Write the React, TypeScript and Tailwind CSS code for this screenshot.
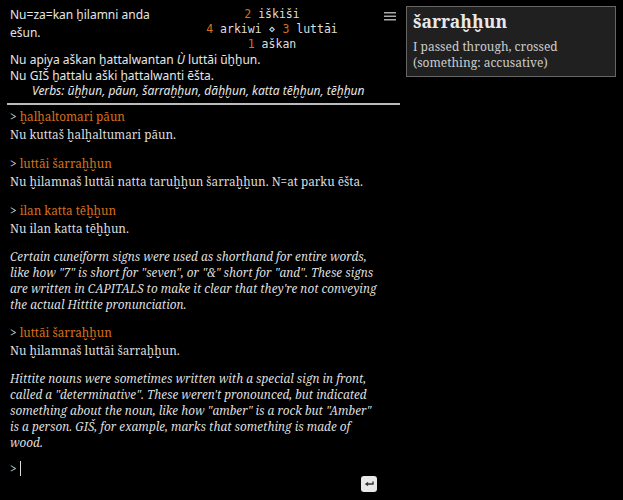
import React from 'react';

const serif = { fontFamily: '"Noto Serif", "DejaVu Serif", serif' };

function Command({ text }: { text: string }) {
  return (
    <div className="text-[11.75px] leading-[18px]">
      <span className="text-[#ddd]">&gt; </span>
      <span className="text-[#d8701c]">{text}</span>
    </div>
  );
}

export default function App() {
  return (
    <div className="w-[623px] h-[500px] bg-black text-[#ddd] flex overflow-hidden">
      <div className="w-[400px] shrink-0 flex flex-col relative">
        <div className="pl-[10px] pt-[6px]" style={{ fontFamily: '"Noto Sans", "Open Sans", sans-serif' }}>
          <div className="flex">
            <div className="w-[150px] text-[12px] leading-[18px] text-[#e6e6e6]">Nu=za=kan ḫilamni anda ešun.</div>
            <div className="w-[224px] mt-[1px] text-[11.5px] leading-[15px] text-[#ddd] text-center" style={{ fontFamily: '"DejaVu Sans Mono", monospace' }}>
              <div><span className="text-[#d8701c]">2</span> iškiši</div>
              <div><span className="text-[#d8701c]">4</span> arkiwi ⋄ <span className="text-[#d8701c]">3</span> luttāi</div>
              <div><span className="text-[#d8701c]">1</span> aškan</div>
            </div>
            <div className="w-[12px] pt-[6px]">
              <svg width="12" height="9" viewBox="0 0 12 9">
                <rect x="0" y="0" width="12" height="1.5" fill="#aaa" />
                <rect x="0" y="3.5" width="12" height="1.5" fill="#aaa" />
                <rect x="0" y="7" width="12" height="1.5" fill="#aaa" />
              </svg>
            </div>
          </div>
          <div className="text-[12px] leading-[15.5px] text-[#e6e6e6]">
            <div>Nu apiya aškan ḫattalwantan <i>Ù</i> luttāi ūḫḫun.</div>
            <div>Nu GIŠ ḫattalu aški ḫattalwanti ēšta.</div>
            <div className="italic pl-[22px]">Verbs: ūḫḫun, pāun, šarraḫḫun, dāḫḫun, katta tēḫḫun, tēḫḫun</div>
          </div>
        </div>
        <div className="ml-[7px] mt-[4px] h-[2px] bg-[#bbb]" />
        <div className="pl-[10px] pr-[19px] pt-[2.5px] flex flex-col gap-[11px]" style={serif}>
          <div>
            <Command text="ḫalḫaltomari pāun" />
            <div className="text-[11.75px] leading-[18px]">Nu kuttaš ḫalḫaltumari pāun.</div>
          </div>
          <div>
            <Command text="luttāi šarraḫḫun" />
            <div className="text-[11.75px] leading-[18px]">Nu ḫilamnaš luttāi natta taruḫḫun šarraḫḫun. N=at parku ēšta.</div>
          </div>
          <div>
            <Command text="ilan katta tēḫḫun" />
            <div className="text-[11.75px] leading-[18px]">Nu ilan katta tēḫḫun.</div>
          </div>
          <div className="italic text-[11.75px] leading-[16px]">
            Certain cuneiform signs were used as shorthand for entire words, like how "7" is short for "seven", or "&amp;" short for "and". These signs are written in CAPITALS to make it clear that they're not conveying the actual Hittite pronunciation.
          </div>
          <div>
            <Command text="luttāi šarraḫḫun" />
            <div className="text-[11.75px] leading-[18px]">Nu ḫilamnaš luttāi šarraḫḫun.</div>
          </div>
          <div className="italic text-[11.75px] leading-[16px]">
            Hittite nouns were sometimes written with a special sign in front, called a "determinative". These weren't pronounced, but indicated something about the noun, like how "amber" is a rock but "Amber" is a person. GIŠ, for example, marks that something is made of wood.
          </div>
          <div className="flex items-center text-[11.75px] leading-[18px] -mt-[2px]">
            <span>&gt;</span>
            <span className="ml-[3px] w-[1px] h-[15px] bg-[#ddd]" />
          </div>
        </div>
        <div className="absolute left-[361px] top-[476px] w-[16px] h-[16px] rounded-[3px] bg-[#e8e8e8] flex items-center justify-center">
          <svg width="9" height="6" viewBox="0 0 9 6">
            <path d="M8 0.5 V3 H1.5 M3 1.5 L1 3 L3 4.5" stroke="#333" strokeWidth="1.4" fill="none" />
          </svg>
        </div>
      </div>
      <div className="flex-1 pl-[6px] pr-[7px] pt-[6px]">
        <div className="bg-[#202020] border border-[#666] px-[6px] pt-[2px] pb-[5px]" style={serif}>
          <div className="text-[17.5px] leading-[24px] font-bold text-[#e8e8e8]">šarraḫḫun</div>
          <div className="text-[12px] leading-[16px] text-[#ccc] mt-[6px]">I passed through, crossed (something: accusative)</div>
        </div>
      </div>
    </div>
  );
}
